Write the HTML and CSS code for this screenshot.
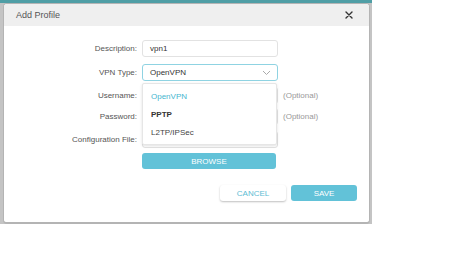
FILE: index.html
```html
<!DOCTYPE html>
<html>
<head>
<meta charset="utf-8">
<link rel="stylesheet" href="styles.css">
</head>
<body>
<div class="frame">
  <div class="dialog">
    <div class="header">
      <span class="title">Add Profile</span>
      <svg class="close" width="8" height="8" viewBox="0 0 8 8"><path d="M1 1L7 7M7 1L1 7" stroke="#333" stroke-width="1.4" stroke-linecap="round"/></svg>
    </div>
    <div class="form">
      <div class="row r-desc">
        <span class="label">Description:</span>
        <div class="input">vpn1</div>
      </div>
      <div class="row r-type">
        <span class="label">VPN Type:</span>
        <div class="input select">OpenVPN
          <svg class="chev" width="9" height="6" viewBox="0 0 9 6"><path d="M1 1L4.5 4.5L8 1" stroke="#aaa" stroke-width="1" fill="none"/></svg>
        </div>
        <div class="menu">
          <div class="opt active">OpenVPN</div>
          <div class="opt strong">PPTP</div>
          <div class="opt">L2TP/IPSec</div>
        </div>
      </div>
      <div class="row r-user">
        <span class="label">Username:</span>
        <div class="input"></div>
        <span class="hint">(Optional)</span>
      </div>
      <div class="row r-pass">
        <span class="label">Password:</span>
        <div class="input"></div>
        <span class="hint">(Optional)</span>
      </div>
      <div class="row r-conf">
        <span class="label">Configuration File:</span>
        <div class="input"></div>
      </div>
      <div class="row r-browse">
        <span class="label"></span>
        <div class="btn browse">BROWSE</div>
      </div>
      <div class="actions">
        <div class="btn cancel">CANCEL</div>
        <div class="btn save">SAVE</div>
      </div>
    </div>
  </div>
</div>
</body>
</html>
```
FILE: styles.css
```css
html, body {
  margin: 0;
  padding: 0;
  background: #fff;
  font-family: "Liberation Sans", Arial, sans-serif;
}
.frame {
  width: 369px;
  height: 221px;
  padding: 3px 0 0 3px;
  background: linear-gradient(to bottom, #4f9ea5 0, #4f9ea5 3px, #c4c4c4 3px);
}
.dialog {
  width: 365px;
  height: 218px;
  background: #fff;
  border: 1px solid #b4b4b4;
  border-bottom-width: 2px;
  border-radius: 4px;
  overflow: hidden;
}
.header {
  height: 22px;
  background: #efefef;
  display: flex;
  align-items: center;
  justify-content: space-between;
  padding: 0 16px 0 12px;
}
.title {
  font-size: 9px;
  color: #555;
}
.form {
  padding-top: 14px;
}
.row {
  display: flex;
  align-items: center;
  height: 17px;
  position: relative;
}
.label {
  width: 133px;
  text-align: right;
  font-size: 8px;
  color: #555;
  flex: none;
}
.input {
  margin-left: 5px;
  height: 15px;
  border: 1px solid #e2e2e2;
  border-radius: 3px;
  font-size: 8px;
  color: #333;
  display: flex;
  align-items: center;
  padding-left: 7px;
  box-sizing: content-box;
  width: 127px;
  flex: none;
}
.select {
  border-color: #8fd3e2;
  position: relative;
}
.chev {
  position: absolute;
  right: 6px;
  top: 5px;
}
.hint {
  margin-left: 5px;
  font-size: 8px;
  color: #999;
}
.r-type { margin-top: 7px; }
.r-user { margin-top: 6px; }
.r-pass { margin-top: 4px; }
.r-conf { margin-top: 6px; }
.r-browse { margin-top: 5px; height: 16px; }
.menu {
  position: absolute;
  left: 138px;
  top: 19px;
  width: 135px;
  height: 62px;
  background: #fff;
  border: 1px solid #e6e6e6;
  border-radius: 2px;
  box-shadow: 0 1px 3px rgba(0,0,0,0.12);
  padding-top: 4px;
  box-sizing: border-box;
  z-index: 2;
}
.opt {
  height: 18px;
  line-height: 18px;
  padding-left: 8px;
  font-size: 8px;
  color: #444;
}
.opt.strong { color: #333; font-weight: bold; }
.opt.active { color: #46b6cf; }
.btn {
  font-size: 8px;
  display: flex;
  align-items: center;
  justify-content: center;
  border-radius: 3px;
  height: 16px;
}
.browse {
  margin-left: 5px;
  width: 134px;
  background: #62c2d8;
  color: #fff;
}
.actions {
  display: flex;
  justify-content: flex-end;
  gap: 5px;
  margin-top: 16px;
  padding-right: 12px;
}
.cancel {
  width: 66px;
  background: #fff;
  color: #5cbcd3;
  box-shadow: 0 1px 2px rgba(0,0,0,0.25);
}
.save {
  width: 66px;
  background: #62c2d8;
  color: #fff;
}
```
